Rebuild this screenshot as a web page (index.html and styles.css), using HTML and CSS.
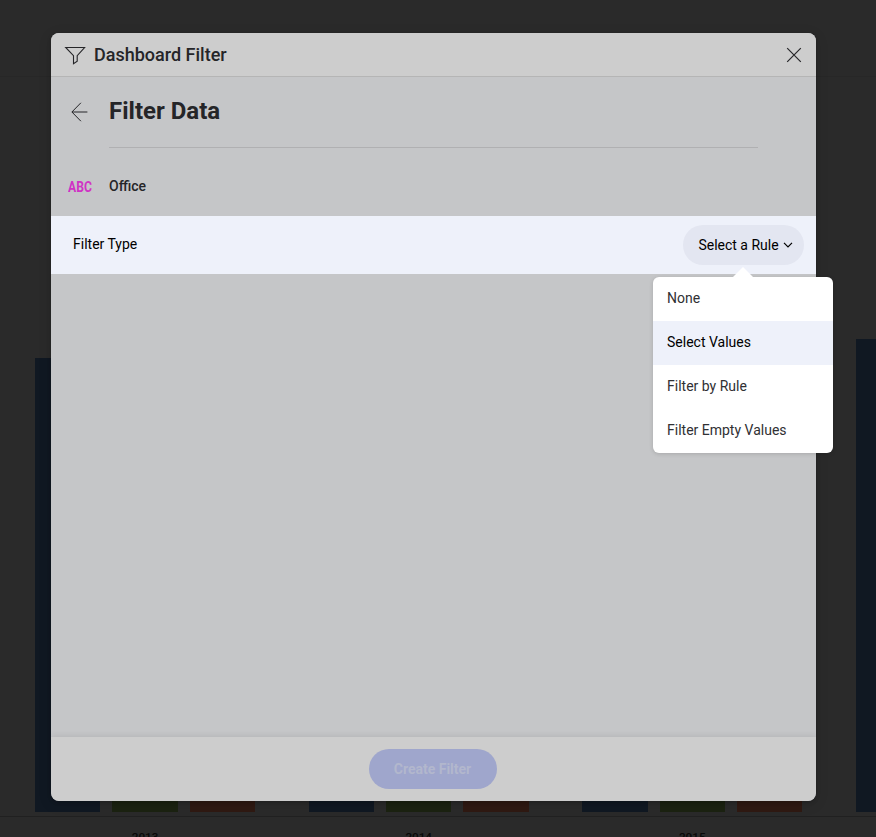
FILE: index.html
```html
<!DOCTYPE html>
<html lang="en">
<head>
<meta charset="utf-8">
<title>Dashboard Filter</title>
<link rel="stylesheet" href="styles.css">
</head>
<body>
<div class="stage">
  <div class="backdrop">
    <div class="topbar"></div>
    <div class="chart">
      <div class="group"><i class="bar blue"></i><i class="bar green short"></i><i class="bar red short"></i></div>
      <div class="group"><i class="bar blue short"></i><i class="bar green short"></i><i class="bar red short"></i></div>
      <div class="group"><i class="bar blue short"></i><i class="bar green short"></i><i class="bar red short"></i></div>
      <div class="group"><i class="bar blue tall"></i></div>
    </div>
    <div class="axis"><span>2013</span><span>2014</span><span>2015</span></div>
  </div>
  <main class="dialog">
    <header class="dialog-head">
      <svg class="funnel" width="22" height="20" viewBox="0 0 22 20"><path d="M1.7 1.5H20.6L13.2 9.7V15.3L9.5 17.7V9.7Z"/></svg>
      <h1>Dashboard Filter</h1>
      <svg class="close" width="16" height="16" viewBox="0 0 16 16"><path d="M1.2 1.2L14.8 14.8M14.8 1.2L1.2 14.8"/></svg>
    </header>
    <section class="content">
      <div class="title-row">
        <svg class="back" width="18" height="20" viewBox="0 0 18 20"><path d="M9.9 .8L.9 10L9.9 19.2M.9 10H16.4"/></svg>
        <h2>Filter Data</h2>
      </div>
      <div class="field-row">
        <span class="abc"><span>ABC</span></span>
        <span class="field">Office</span>
      </div>
      <div class="type-row">
        <span class="type-label">Filter Type</span>
        <div class="select">
          <button class="rule">Select a Rule<svg width="10" height="8" viewBox="0 0 10 8"><path d="M1 1.8L5 5.8L9 1.8"/></svg></button>
          <ul class="menu">
            <li>None</li>
            <li class="active">Select Values</li>
            <li>Filter by Rule</li>
            <li>Filter Empty Values</li>
          </ul>
        </div>
      </div>
    </section>
    <footer class="dialog-foot"><button class="create">Create Filter</button></footer>
  </main>
</div>
</body>
</html>
```

FILE: styles.css
```css
* { box-sizing: border-box; }
body {
  margin: 0;
  height: 837px;
  overflow: hidden;
  background: #2a2a2a;
  font-family: Roboto, "Liberation Sans", sans-serif;
}
h1, h2, ul { margin: 0; padding: 0; }
button { border: 0; font: inherit; }
svg { fill: none; stroke: #252528; flex: none; }

.stage {
  display: grid;
  grid-template: 837px / 876px;
  overflow: hidden;
}
.backdrop, .dialog { grid-area: 1 / 1; }

.backdrop {
  display: flex;
  flex-direction: column;
  overflow: hidden;
}
.topbar {
  height: 77px;
  flex: none;
  border-bottom: 1px solid #272727;
}
.chart {
  height: 740px;
  flex: none;
  display: flex;
  gap: 53.4px;
  padding: 0 0 4px 35px;
  border-bottom: 1px solid #202020;
}
.group {
  width: 220.2px;
  flex: none;
  display: flex;
  align-items: flex-end;
  gap: 12px;
}
.bar { width: 65.4px; height: 454px; }
.bar.short { height: 80px; }
.bar.tall { height: 473px; }
.blue { background: #101822; }
.green { background: #1b2211; }
.red { background: #2f1912; }
.axis {
  display: flex;
  padding: 13px 0 0 35px;
  gap: 53.4px;
  font-size: 11.7px;
  font-weight: 500;
  line-height: 14px;
  color: #080808;
}
.axis span { width: 220.2px; flex: none; text-align: center; }

.dialog {
  width: 765px;
  height: 768px;
  margin: 33px 0 0 51px;
  display: flex;
  flex-direction: column;
  border-radius: 8px;
  background: #c5c6c8;
  box-shadow: 0 1px 4px rgba(0, 0, 0, .2), 0 3px 14px rgba(0, 0, 0, .12);
}
.dialog-head {
  height: 44px;
  display: flex;
  align-items: center;
  padding: 0 14px 0 13px;
  border-radius: 8px 8px 0 0;
  border-bottom: 1px solid #b5b5b5;
  background: #cdcdcd;
}
.dialog-head h1 {
  flex: 1;
  margin: 1px 0 0 8px;
  font-size: 18px;
  font-weight: 500;
  line-height: 22px;
  color: #252528;
}
.funnel { margin-top: 3px; stroke-width: 1.1; }
.close { stroke-width: 1.2; margin-top: 1px; }

.content { flex: 1; }
.title-row {
  height: 71px;
  width: 649px;
  margin-left: 58px;
  border-bottom: 1px solid #b0b0b2;
  display: flex;
  align-items: flex-start;
}
.back { margin: 25px 20px 0 -38px; stroke-width: 1; }
.title-row h2 {
  margin-top: 20px;
  font-size: 24px;
  font-weight: 700;
  line-height: 28px;
  color: #252528;
}
.field-row {
  height: 68px;
  display: flex;
  align-items: center;
  padding: 7px 0 0 17px;
}
.abc {
  width: 41px;
  font-size: 15px;
  font-weight: 700;
  line-height: 18px;
  color: #d032c5;
  padding-top: 3px;
}
.abc span { display: inline-block; transform: scaleX(.81); transform-origin: left; }
.field { font-size: 14px; font-weight: 500; color: #252528; }

.type-row {
  height: 58px;
  display: flex;
  align-items: center;
  justify-content: space-between;
  padding: 0 12px 0 22px;
  background: #eef1fa;
}
.type-label { font-size: 14px; color: #000; margin-top: -2px; }
.select { position: relative; }
.rule {
  width: 121px;
  height: 40px;
  display: flex;
  align-items: center;
  justify-content: center;
  gap: 4px;
  padding: 0 0 0 4px;
  border-radius: 20px;
  background: #e3e6f1;
  color: #000;
  font-size: 14px;
}
.rule svg { stroke: #000; stroke-width: 1.2; }

.menu {
  position: absolute;
  top: 52px;
  right: -29px;
  width: 180px;
  list-style: none;
  border-radius: 6px;
  background: #fff;
  box-shadow: 0 1px 4px rgba(0, 0, 0, .15);
  font-size: 14px;
  color: #303033;
}
.menu::before {
  content: "";
  position: absolute;
  left: 80px;
  top: -10px;
  border: solid transparent;
  border-width: 0 10px 10px;
  border-bottom-color: #fff;
}
.menu li { height: 44px; padding: 0 14px; line-height: 43px; }
.menu .active { background: #eef1fa; color: #000; }

.dialog-foot {
  height: 64px;
  display: flex;
  align-items: center;
  justify-content: center;
  padding-right: 2px;
  border-radius: 0 0 8px 8px;
  background: #cdcdcd;
  box-shadow: 0 -1px 6px rgba(0, 0, 0, .09);
  clip-path: inset(-12px 0 0 0 round 0 0 8px 8px);
}
.create {
  width: 128px;
  height: 40px;
  border-radius: 20px;
  background: #9fa6cc;
  color: #b2b7cd;
  font-size: 14px;
  font-weight: 700;
  padding: 0;
}
```
